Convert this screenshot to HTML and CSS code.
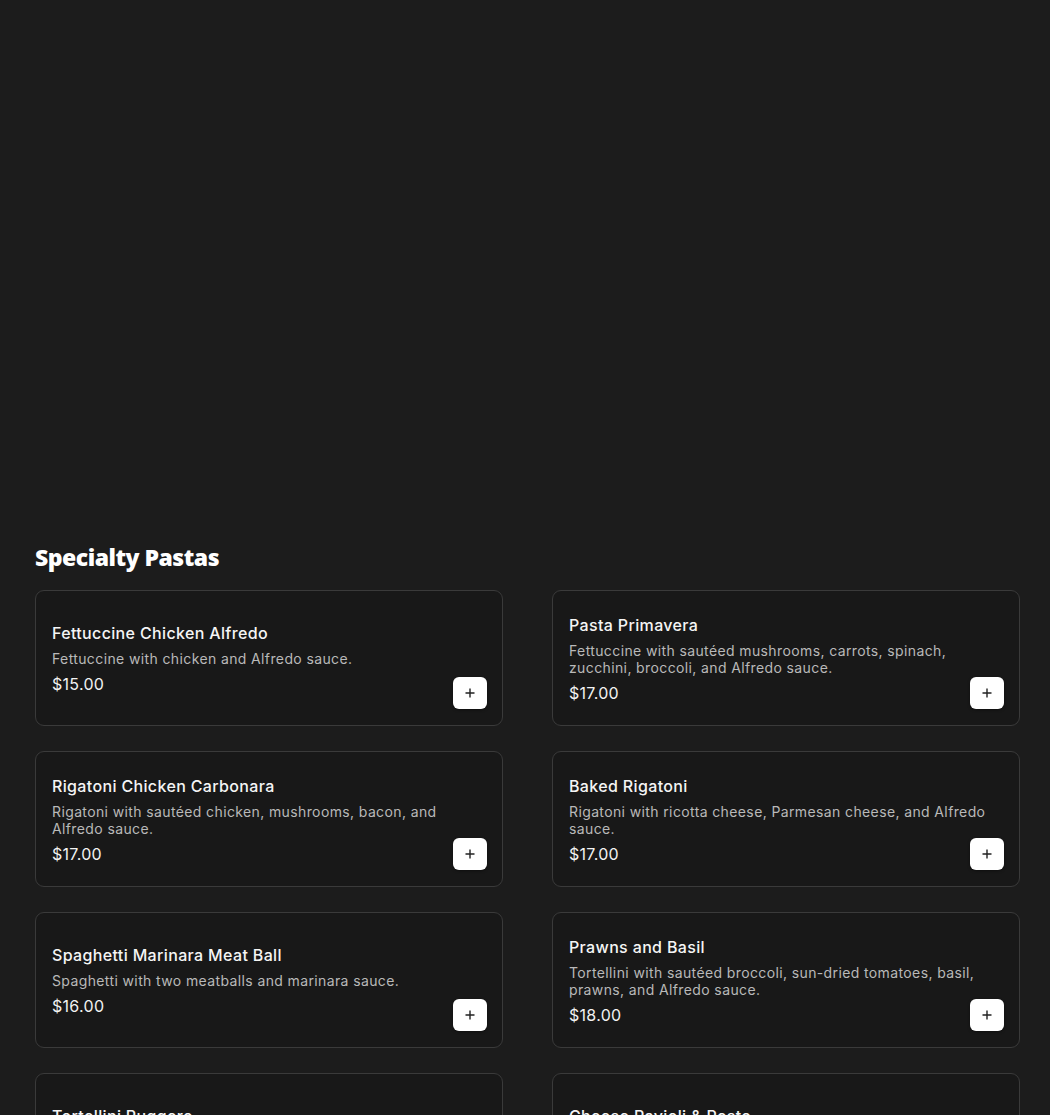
FILE: index.html
```html
<!DOCTYPE html>
<html lang="en">
<head>
<meta charset="utf-8">
<title>Specialty Pastas</title>
<link rel="stylesheet" href="styles.css">
</head>
<body>
<main class="page">
  <div class="hero"></div>
  <section class="section">
    <h2 class="section-title">Specialty Pastas</h2>
    <div class="grid">
      <article class="card">
        <div class="info">
          <h3 class="name">Fettuccine Chicken Alfredo</h3>
          <p class="desc">Fettuccine with chicken and Alfredo sauce.</p>
          <p class="price">$15.00</p>
        </div>
        <button class="add" aria-label="Add"><svg width="10" height="10" viewBox="0 0 10 10"><path d="M5 0.5v9M0.5 5h9" stroke="#222" stroke-width="1.4"/></svg></button>
      </article>
      <article class="card">
        <div class="info">
          <h3 class="name">Pasta Primavera</h3>
          <p class="desc">Fettuccine with sautéed mushrooms, carrots, spinach, zucchini, broccoli, and Alfredo sauce.</p>
          <p class="price">$17.00</p>
        </div>
        <button class="add" aria-label="Add"><svg width="10" height="10" viewBox="0 0 10 10"><path d="M5 0.5v9M0.5 5h9" stroke="#222" stroke-width="1.4"/></svg></button>
      </article>
      <article class="card">
        <div class="info">
          <h3 class="name">Rigatoni Chicken Carbonara</h3>
          <p class="desc">Rigatoni with sautéed chicken, mushrooms, bacon, and Alfredo sauce.</p>
          <p class="price">$17.00</p>
        </div>
        <button class="add" aria-label="Add"><svg width="10" height="10" viewBox="0 0 10 10"><path d="M5 0.5v9M0.5 5h9" stroke="#222" stroke-width="1.4"/></svg></button>
      </article>
      <article class="card">
        <div class="info">
          <h3 class="name">Baked Rigatoni</h3>
          <p class="desc">Rigatoni with ricotta cheese, Parmesan cheese, and Alfredo sauce.</p>
          <p class="price">$17.00</p>
        </div>
        <button class="add" aria-label="Add"><svg width="10" height="10" viewBox="0 0 10 10"><path d="M5 0.5v9M0.5 5h9" stroke="#222" stroke-width="1.4"/></svg></button>
      </article>
      <article class="card">
        <div class="info">
          <h3 class="name">Spaghetti Marinara Meat Ball</h3>
          <p class="desc">Spaghetti with two meatballs and marinara sauce.</p>
          <p class="price">$16.00</p>
        </div>
        <button class="add" aria-label="Add"><svg width="10" height="10" viewBox="0 0 10 10"><path d="M5 0.5v9M0.5 5h9" stroke="#222" stroke-width="1.4"/></svg></button>
      </article>
      <article class="card">
        <div class="info">
          <h3 class="name">Prawns and Basil</h3>
          <p class="desc">Tortellini with sautéed broccoli, sun-dried tomatoes, basil, prawns, and Alfredo sauce.</p>
          <p class="price">$18.00</p>
        </div>
        <button class="add" aria-label="Add"><svg width="10" height="10" viewBox="0 0 10 10"><path d="M5 0.5v9M0.5 5h9" stroke="#222" stroke-width="1.4"/></svg></button>
      </article>
      <article class="card">
        <div class="info">
          <h3 class="name">Tortellini Ruggero</h3>
          <p class="desc">Tortellini with chicken and Alfredo sauce.</p>
          <p class="price">$17.00</p>
        </div>
        <button class="add" aria-label="Add"><svg width="10" height="10" viewBox="0 0 10 10"><path d="M5 0.5v9M0.5 5h9" stroke="#222" stroke-width="1.4"/></svg></button>
      </article>
      <article class="card">
        <div class="info">
          <h3 class="name">Cheese Ravioli &amp; Pesto</h3>
          <p class="desc">Cheese ravioli with pesto sauce.</p>
          <p class="price">$16.00</p>
        </div>
        <button class="add" aria-label="Add"><svg width="10" height="10" viewBox="0 0 10 10"><path d="M5 0.5v9M0.5 5h9" stroke="#222" stroke-width="1.4"/></svg></button>
      </article>
    </div>
  </section>
</main>
</body>
</html>
```
FILE: styles.css
```css
* { box-sizing: border-box; }
html, body { margin: 0; padding: 0; background: #1c1c1c; }
body { font-family: "Inter", "Open Sans", sans-serif; color: #f4f4f4; }
.page { padding: 0 30px 40px 35px; }
.hero { height: 541px; }
.section-title {
  font-family: "Open Sans", sans-serif;
  font-weight: 800;
  font-size: 23px;
  line-height: 32px;
  margin: 0 0 17px;
  color: #ffffff;
  letter-spacing: -0.5px;
}
.grid {
  display: grid;
  grid-template-columns: 468px 468px;
  column-gap: 49px;
  row-gap: 25px;
}
.card {
  display: grid;
  min-height: 136px;
  padding: 16px 15px 15px 16px;
  background: #181818;
  border: 1px solid #3a3a3a;
  border-radius: 9px;
}
.info { grid-area: 1 / 1; align-self: center; }
.add {
  grid-area: 1 / 1;
  justify-self: end;
  align-self: end;
  width: 34px;
  height: 32px;
  margin-bottom: 1px;
  padding: 0;
  border: none;
  border-radius: 6px;
  background: #ffffff;
  display: flex;
  align-items: center;
  justify-content: center;
  box-shadow: 0 1px 3px rgba(0,0,0,0.4);
}
.name { margin: 0; font-size: 16px; line-height: 20px; font-weight: 500; color: #f5f5f5; letter-spacing: 0.35px; }
.desc { margin: 7px 0 0; font-size: 14px; line-height: 17px; color: #b9b9b9; letter-spacing: 0.38px; }
.price { margin: 7px 0 0; font-size: 16px; line-height: 20px; color: #f2f2f2; letter-spacing: 0.3px; }
```
